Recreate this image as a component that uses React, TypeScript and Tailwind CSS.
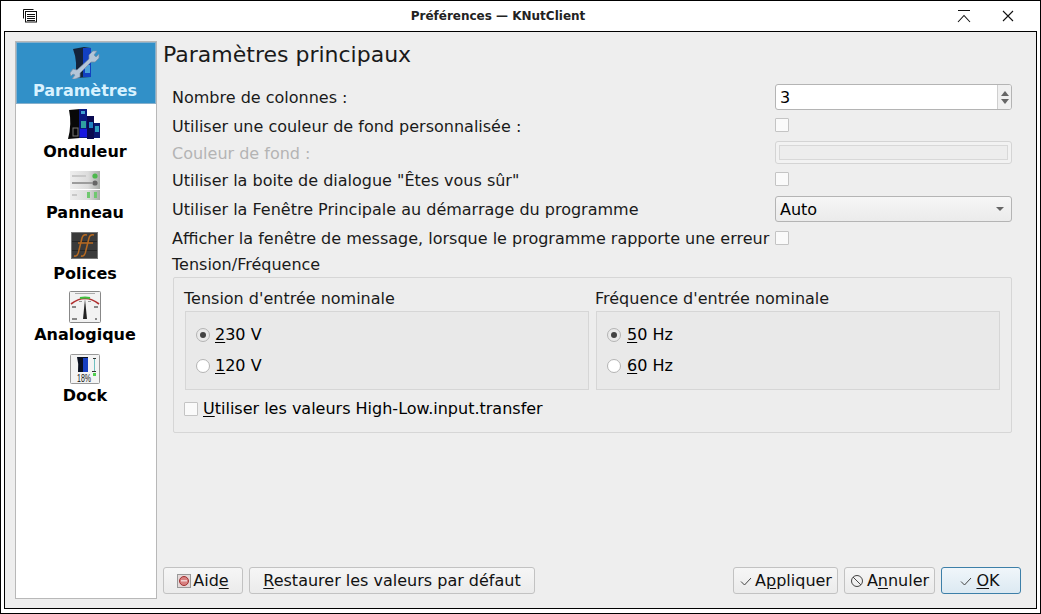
import React from "react";

const U = ({ children }: { children: React.ReactNode }) => <span className="underline underline-offset-2 decoration-1">{children}</span>;

function Check({ className = "" }: { className?: string }) {
  return <span className={`block w-[14px] h-[14px] bg-[#fafafa] border border-[#c4c4c4] rounded-[1px] shrink-0 ${className}`} />;
}

function Radio({ on }: { on?: boolean }) {
  return (
    <span className={`flex items-center justify-center w-[14px] h-[14px] rounded-full border border-[#b4b4b4] shrink-0 ${on ? "bg-[#eaeaea]" : "bg-white"}`}>
      {on && <span className="block w-[6px] h-[6px] rounded-full bg-[#444]" />}
    </span>
  );
}

function Row({ h, mt, label, dim, low, children }: { h: number; mt: number; label: string; dim?: boolean; low?: boolean; children: React.ReactNode }) {
  return (
    <div className="flex items-center justify-between pl-[9px]" style={{ height: h, marginTop: mt }}>
      <span className={`${low ? "pt-[4px]" : "pt-[2px]"} ${dim ? "text-[#b4b4b4]" : "text-[#1a1a1a]"}`}>{label}</span>
      <div className="w-[237px] flex">{children}</div>
    </div>
  );
}

function IconWrench() {
  return (
    <svg width="30" height="32" viewBox="0 0 30 32">
      <path d="M3 2 L14 0 L21 1 L21 30 L5 31 Q8 15 3 2Z" fill="#14233a" />
      <path d="M13 1 L21 1 L21 30 L13 30Z" fill="#1240c0" />
      <rect x="15" y="18" width="5" height="8" fill="#4aa0d8" />
      <path d="M0 26 L3 22 L7 23 L19 12 L19 8 L23 4 L27 4 L24 8 L26 10 L29 7 L29 11 L25 15 L21 15 L10 26 L10 30 L5 32 L2 32 L5 28 L3 27 L1 29Z" fill="#b4c6d8" stroke="#7a8ea4" strokeWidth="0.7" />
    </svg>
  );
}

function IconUps() {
  return (
    <svg width="34" height="32" viewBox="0 0 34 32">
      <path d="M1 2 L12 1 L12 30 L0 31 Q4 16 1 2Z" fill="#080808" />
      <rect x="11" y="1" width="8" height="29" fill="#0a1a80" />
      <rect x="13" y="3" width="4" height="3" fill="#40a0d0" />
      <rect x="13" y="13" width="5" height="7" fill="#30a0a0" />
      <rect x="12" y="21" width="7" height="8" fill="#1818e0" />
      <rect x="19" y="8" width="7" height="23" fill="#0a0a50" />
      <rect x="21" y="14" width="4" height="6" fill="#2080c0" />
      <rect x="26" y="15" width="6" height="15" fill="#0a1870" />
      <rect x="27" y="18" width="4" height="6" fill="#30a0c0" />
      <rect x="5" y="20" width="5" height="8" fill="none" stroke="#777" />
    </svg>
  );
}

function IconPanel() {
  return (
    <svg width="31" height="30" viewBox="0 0 31 30">
      <defs>
        <linearGradient id="pg" x1="0" x2="1" y1="0" y2="0">
          <stop offset="0" stopColor="#eeeeee" />
          <stop offset="0.6" stopColor="#dcdcdc" />
          <stop offset="1" stopColor="#a8aca8" />
        </linearGradient>
      </defs>
      <rect x="0" y="0" width="30" height="18" fill="url(#pg)" />
      <rect x="0" y="19" width="30" height="10" fill="url(#pg)" />
      <rect x="2" y="4" width="14" height="2" fill="#c8c8c8" />
      <rect x="2" y="11" width="20" height="2" fill="#9c9c9c" />
      <circle cx="25" cy="5" r="2.6" fill="#4cb84c" />
      <circle cx="25" cy="12" r="2.6" fill="#666" />
      <rect x="2" y="23" width="5" height="2" fill="#c8c8c8" />
      <rect x="17" y="21" width="3" height="6" fill="#70c870" />
      <rect x="24" y="21" width="3" height="6" fill="#70c870" />
    </svg>
  );
}

function IconFont() {
  return (
    <svg className="mb-[2px]" width="28" height="28" viewBox="0 0 28 28">
      <rect x="0.5" y="0.5" width="26" height="26" fill="#3a3a3a" stroke="#777" />
      <rect x="1" y="9" width="25" height="1" fill="#262626" />
      <rect x="1" y="18" width="25" height="1" fill="#262626" />
      <path d="M3 24 Q7 25 8 18 L11 6 Q12 2 16 3 M7 11 L14 11 M10 24 Q14 25 15 18 L18 6 Q19 2 23 3 M14 11 L22 11" fill="none" stroke="#b86a20" strokeWidth="1.5" />
    </svg>
  );
}

function IconGauge() {
  return (
    <svg width="32" height="32" viewBox="0 0 32 32">
      <rect x="0.5" y="0.5" width="31" height="31" rx="1" fill="#f2f2f2" stroke="#888" />
      <path d="M2 13 Q16 2 30 13" fill="none" stroke="#b03030" strokeWidth="1.6" />
      <path d="M11 7 Q16 6 21 7" fill="none" stroke="#40c040" strokeWidth="2" />
      <path d="M14 28 L16 8 L18 28Z" fill="#222" />
      <rect x="6" y="2" width="20" height="1" fill="#aaa" />
      <rect x="3" y="15" width="4" height="2" fill="#888" />
      <rect x="25" y="15" width="4" height="2" fill="#888" />
      <rect x="10" y="10" width="3" height="1" fill="#999" />
      <rect x="19" y="10" width="3" height="1" fill="#999" />
      <rect x="3" y="27" width="5" height="2" fill="#888" />
      <rect x="26" y="27" width="2" height="2" fill="#888" />
    </svg>
  );
}

function IconDock() {
  return (
    <svg width="30" height="30" viewBox="0 0 30 30">
      <rect x="0.5" y="0.5" width="29" height="29" rx="1" fill="#f4f4f4" stroke="#999" />
      <path d="M7 3 L18 3 L18 18 L8 18 Q9 10 7 3Z" fill="#0a1020" />
      <rect x="13" y="4" width="5" height="14" fill="#1840c0" />
      <rect x="23" y="4" width="3" height="1" fill="#333" />
      <rect x="24" y="5" width="1" height="12" fill="#70c0c0" />
      <rect x="22" y="17" width="4" height="1" fill="#333" />
      <rect x="23" y="19" width="3" height="3" fill="#50d050" />
      <text x="7" y="28" fontSize="10" fill="#111" textLength="14" lengthAdjust="spacingAndGlyphs" fontFamily="Liberation Sans, sans-serif">18%</text>
    </svg>
  );
}

function SideItem({ icon, label, active, h }: { icon: React.ReactNode; label: string; active?: boolean; h: number }) {
  return (
    <div className={`flex flex-col items-center pr-[2px] ${active ? "bg-[#3190c8] border border-[#86b0cc] text-[#d8f2ff]" : "text-black"}`} style={{ height: h }}>
      <div className={`flex items-end justify-center h-[36px] ${active ? "pt-[3px]" : ""}`}>{icon}</div>
      <span className="font-bold text-[16px] leading-[20px] mt-[2px]">{label}</span>
    </div>
  );
}

const btn = "flex items-center justify-center h-[27px] rounded-[3px] border border-[#c2c2c2] bg-gradient-to-b from-[#f6f6f6] to-[#ebebeb] text-[#111]";

export default function App() {
  return (
    <div className="w-[1041px] h-[614px] bg-white border border-black flex flex-col overflow-hidden text-[16px] leading-[20px]" style={{ fontFamily: '"DejaVu Sans", sans-serif' }}>
      <div className="h-[30px] flex items-center justify-between shrink-0 relative">
        <svg className="ml-[22px]" width="14" height="14" viewBox="0 0 14 14" fill="none" stroke="#111">
          <path d="M0.5 9.5 V0.5 H10.5" />
          <rect x="2.5" y="2.5" width="11" height="10.5" fill="white" />
          <path d="M4 5.5H12M4 7.5H12M4 9.5H12M4 11.5H12" strokeWidth="1" />
        </svg>
        <span className="absolute left-0 right-0 text-center font-bold text-[12px] text-[#222] pr-[45px]">Préférences — KNutClient</span>
        <div className="flex items-center gap-[31px] mr-[26px]">
          <svg width="14" height="14" viewBox="0 0 14 14" fill="none" stroke="#111" strokeWidth="1.1">
            <path d="M1 1.5H13M1 13L7 6.5L13 13" />
          </svg>
          <svg width="12" height="12" viewBox="0 0 12 12" fill="none" stroke="#111" strokeWidth="1.1">
            <path d="M1 1L11 11M11 1L1 11" />
          </svg>
        </div>
      </div>

      <div className="mx-[3px] h-[578px] border border-black bg-[#eeeeee] flex pl-[10px] pr-[15px] pt-[9px] pb-[9px] gap-[6px] shrink-0">
        <div className="w-[142px] bg-white border border-[#b8b8b8] flex flex-col shrink-0">
          <SideItem active h={62} icon={<IconWrench />} label="Paramètres" />
          <SideItem h={61} icon={<IconUps />} label="Onduleur" />
          <SideItem h={61} icon={<IconPanel />} label="Panneau" />
          <SideItem h={61} icon={<IconFont />} label="Polices" />
          <SideItem h={61} icon={<IconGauge />} label="Analogique" />
          <SideItem h={61} icon={<IconDock />} label="Dock" />
        </div>

        <div className="flex-1 flex flex-col min-w-0 pb-[5px]">
          <div className="text-[22px] leading-[26px] h-[27px] pt-[1px] text-[#1a1a1a]">Paramètres principaux</div>
          <div className="pr-[9px] flex flex-col">
            <Row h={26} mt={16} label="Nombre de colonnes :">
              <div className="w-full h-[26px] flex bg-white border border-[#b4b4b4] rounded-[3px] overflow-hidden">
                <span className="flex-1 pl-[4px] pt-[2px] flex items-center text-[16px]">3</span>
                <div className="w-[14px] border-l border-[#cfcfcf] bg-[#f0f0f0] flex flex-col items-center justify-center gap-[3px]">
                  <span className="block w-0 h-0 border-x-[4px] border-x-transparent border-b-[5px] border-b-[#666]" />
                  <span className="block w-0 h-0 border-x-[4px] border-x-transparent border-t-[5px] border-t-[#666]" />
                </div>
              </div>
            </Row>
            <Row h={28} mt={1} low label="Utiliser une couleur de fond personnalisée :"><Check /></Row>
            <Row h={23} mt={2} dim label="Couleur de fond :">
              <div className="w-full h-[23px] border border-[#d4d4d4] rounded-[3px] p-[3px] bg-[#f2f2f2]">
                <div className="w-full h-full border border-[#d8d8d8] bg-[#ededed]" />
              </div>
            </Row>
            <Row h={26} mt={2} low label={'Utiliser la boite de dialogue "Êtes vous sûr"'}><Check /></Row>
            <Row h={26} mt={4} label="Utiliser la Fenêtre Principale au démarrage du programme">
              <div className="w-full h-[26px] flex items-center justify-between pl-[4px] pr-[7px] border border-[#b4b4b4] rounded-[3px] bg-gradient-to-b from-[#f6f6f6] to-[#ebebeb] text-[16px]">
                <span className="pt-[2px]">Auto</span>
                <span className="block w-0 h-0 border-x-[4px] border-x-transparent border-t-[4px] border-t-[#666]" />
              </div>
            </Row>
            <Row h={26} mt={3} label="Afficher la fenêtre de message, lorsque le programme rapporte une erreur"><Check /></Row>
            <div className="pl-[9px] pt-[2px] h-[20px] mt-[3px] flex items-center text-[#1a1a1a]">Tension/Fréquence</div>
            <div className="mt-[3px] ml-[10px] h-[156px] border border-[#d6d6d6] rounded-[2px] bg-[#ededed] pl-[11px] pr-[11px] pt-[10px]">
              <div className="flex gap-[7px]">
                <div className="w-[404px]">
                  <div className="h-[20px] pt-[1px] -ml-[1px] text-[#1a1a1a]">Tension d'entrée nominale</div>
                  <div className="mt-[3px] h-[79px] border border-[#d6d6d6] bg-[#e9e9e9] pl-[10px] pt-[13px] flex flex-col gap-[11px]">
                    <label className="flex items-center gap-[5px] h-[20px]"><Radio on /><span><U>2</U>30 V</span></label>
                    <label className="flex items-center gap-[5px] h-[20px]"><Radio /><span><U>1</U>20 V</span></label>
                  </div>
                </div>
                <div className="flex-1">
                  <div className="h-[20px] pt-[1px] -ml-[1px] text-[#1a1a1a]">Fréquence d'entrée nominale</div>
                  <div className="mt-[3px] h-[79px] border border-[#d6d6d6] bg-[#e9e9e9] pl-[10px] pt-[13px] flex flex-col gap-[11px]">
                    <label className="flex items-center gap-[6px] h-[20px]"><Radio on /><span><U>5</U>0 Hz</span></label>
                    <label className="flex items-center gap-[6px] h-[20px]"><Radio /><span><U>6</U>0 Hz</span></label>
                  </div>
                </div>
              </div>
              <label className="flex items-center gap-[5px] mt-[9px] h-[20px]"><Check className="-ml-[1px]" /><span><U>U</U>tiliser les valeurs High-Low.input.transfer</span></label>
            </div>
          </div>

          <div className="mt-auto flex items-center justify-between">
            <div className="flex gap-[6px]">
              <div className={`${btn} w-[80px] gap-[2px]`}>
                <svg width="14" height="14" viewBox="0 0 14 14">
                  <rect x="0.5" y="0.5" width="13" height="13" fill="#e4d8d8" stroke="#999" />
                  <circle cx="7" cy="7" r="4.5" fill="#d88080" stroke="#a03030" />
                  <rect x="4" y="6" width="6" height="1.5" fill="#f0d0d0" />
                </svg>
                <span>Aid<U>e</U></span>
              </div>
              <div className={`${btn} w-[286px]`}><span><U>R</U>estaurer les valeurs par défaut</span></div>
            </div>
            <div className="flex gap-[6px]">
              <div className={`${btn} w-[105px] gap-[2px]`}>
                <svg width="14" height="14" viewBox="0 0 14 14" fill="none" stroke="#444"><path d="M2 7.5L5.5 11L12 4" /></svg>
                <span>A<U>p</U>pliquer</span>
              </div>
              <div className={`${btn} w-[91px] gap-[3px]`}>
                <svg width="14" height="14" viewBox="0 0 14 14" fill="none" stroke="#444"><circle cx="7" cy="7" r="5.5" /><path d="M3 3L11 11" /></svg>
                <span>A<U>n</U>nuler</span>
              </div>
              <div className="flex items-center justify-center gap-[3px] pr-[3px] h-[27px] w-[80px] rounded-[3px] border border-[#3d7fa8] bg-gradient-to-b from-[#f0f6fa] to-[#dce9f2] text-[#111]">
                <svg width="14" height="14" viewBox="0 0 14 14" fill="none" stroke="#444"><path d="M2 7.5L5.5 11L12 4" /></svg>
                <span><U>O</U>K</span>
              </div>
            </div>
          </div>
        </div>
      </div>
    </div>
  );
}
